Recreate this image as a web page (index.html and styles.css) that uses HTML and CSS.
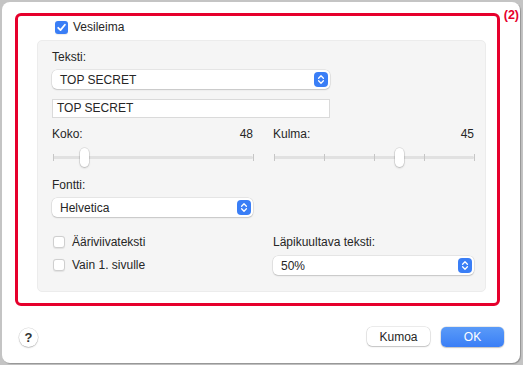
FILE: index.html
```html
<!DOCTYPE html>
<html>
<head>
    <title>Vesileima</title>
    <link rel="stylesheet" href="styles.css">
</head>
<body>
    <div class="dialog">
        <div class="frame">
            <span class="tag">(2)</span>

            <label class="check-row">
                <span class="box checked">
                    <svg width="13" height="13" viewBox="0 0 13 13"><path d="M3.2 6.8 L5.5 9.1 L9.9 3.8" fill="none" stroke="#fff" stroke-width="1.8" stroke-linecap="round" stroke-linejoin="round"/></svg>
                </span>
                Vesileima
            </label>

            <div class="panel">
                <div class="label">Teksti:</div>
                <div class="popup wide">
                    <span>TOP SECRET</span>
                    <span class="stepper">
                        <svg width="14" height="15" viewBox="0 0 14 15"><path d="M4.6 6.2 L7 3.8 L9.4 6.2 M4.6 8.8 L7 11.2 L9.4 8.8" fill="none" stroke="#fff" stroke-width="1.3" stroke-linecap="round" stroke-linejoin="round"/></svg>
                    </span>
                </div>
                <div class="field">TOP SECRET</div>

                <div class="columns">
                    <div class="col">
                        <div class="value-row"><span>Koko:</span><span>48</span></div>
                        <div class="slider">
                            <div class="track"></div>
                            <span class="tick" style="left: 0%"></span>
                            <span class="tick" style="left: 100%"></span>
                            <span class="thumb" style="left: 15.5%"></span>
                        </div>
                        <div class="label font-label">Fontti:</div>
                        <div class="popup">
                            <span>Helvetica</span>
                            <span class="stepper">
                                <svg width="14" height="15" viewBox="0 0 14 15"><path d="M4.6 6.2 L7 3.8 L9.4 6.2 M4.6 8.8 L7 11.2 L9.4 8.8" fill="none" stroke="#fff" stroke-width="1.3" stroke-linecap="round" stroke-linejoin="round"/></svg>
                            </span>
                        </div>
                    </div>
                    <div class="col">
                        <div class="value-row"><span>Kulma:</span><span>45</span></div>
                        <div class="slider">
                            <div class="track"></div>
                            <span class="tick" style="left: 0%"></span>
                            <span class="tick" style="left: 25%"></span>
                            <span class="tick" style="left: 50%"></span>
                            <span class="tick" style="left: 75%"></span>
                            <span class="tick" style="left: 100%"></span>
                            <span class="thumb" style="left: 62.4%"></span>
                        </div>
                    </div>
                </div>

                <div class="columns bottom">
                    <div class="col checks">
                        <label class="opt"><span class="box"></span>Ääriviivateksti</label>
                        <label class="opt"><span class="box"></span>Vain 1. sivulle</label>
                    </div>
                    <div class="col">
                        <div class="label opt-label">Läpikuultava teksti:</div>
                        <div class="popup">
                            <span>50%</span>
                            <span class="stepper">
                                <svg width="14" height="15" viewBox="0 0 14 15"><path d="M4.6 6.2 L7 3.8 L9.4 6.2 M4.6 8.8 L7 11.2 L9.4 8.8" fill="none" stroke="#fff" stroke-width="1.3" stroke-linecap="round" stroke-linejoin="round"/></svg>
                            </span>
                        </div>
                    </div>
                </div>
            </div>
        </div>

        <div class="footer">
            <button class="help">?</button>
            <div class="actions">
                <button class="btn">Kumoa</button>
                <button class="btn primary">OK</button>
            </div>
        </div>
    </div>
</body>
</html>
```

FILE: styles.css
```css
* {
    box-sizing: border-box;
    margin: 0;
    padding: 0;
}

body {
    font-family: "Liberation Sans", Arial, sans-serif;
    font-size: 12px;
    color: #262626;
    background-color: #c4c4c4;
    width: 523px;
    height: 365px;
    overflow: hidden;
}

.dialog {
    margin: 2px 3px 2px 2px;
    height: 361px;
    background-color: #fff;
    border-radius: 8px;
    padding: 11px 0 0 13px;
    display: flex;
    flex-direction: column;
    box-shadow: 1px 1px 1px rgba(0, 0, 0, 0.25);
}

.frame {
    position: relative;
    width: 485px;
    height: 293px;
    border: 3px solid #e6002c;
    border-radius: 6px;
    display: flex;
    flex-direction: column;
}

.tag {
    position: absolute;
    top: -8px;
    right: -22px;
    color: #e6002c;
    font-weight: bold;
    font-size: 12.5px;
}

.check-row {
    height: 22px;
    margin-bottom: 2px;
    padding-left: 37px;
    display: flex;
    align-items: center;
    gap: 5px;
    font-size: 12px;
}

.box {
    width: 12px;
    height: 12px;
    border-radius: 3px;
    background-color: #fff;
    border: 1px solid #cfcfcf;
    box-shadow: 0 0.5px 1px rgba(0, 0, 0, 0.08);
    display: inline-flex;
    flex-shrink: 0;
}

.box.checked {
    width: 13px;
    height: 13px;
    border: none;
    background-color: #3a7ef6;
}

.panel {
    flex: 1;
    margin: 0 11px 11px 19px;
    background-color: #f5f5f5;
    border: 1px solid #ececec;
    border-radius: 5px;
    padding: 9px 11px 0 14px;
}

.label {
    line-height: 14px;
}

.popup {
    position: relative;
    height: 19px;
    background-color: #fff;
    border-radius: 5px;
    box-shadow: 0 0 0 0.5px rgba(0, 0, 0, 0.12), 0 1px 1.5px rgba(0, 0, 0, 0.15);
    display: flex;
    align-items: center;
    justify-content: space-between;
    padding-left: 8px;
    padding-right: 2px;
}

.popup.wide {
    width: 278px;
    margin-top: 6px;
}

.stepper {
    width: 14px;
    height: 15px;
    border-radius: 4px;
    background-color: #3a7ef6;
    display: flex;
}

.field {
    width: 278px;
    height: 19px;
    margin-top: 10px;
    background-color: #fff;
    border: 1px solid #dadada;
    padding-left: 4px;
    line-height: 17px;
}

.columns {
    display: grid;
    grid-template-columns: 201px 201px;
    column-gap: 20px;
}

.value-row {
    margin-top: 9px;
    line-height: 14px;
    display: flex;
    justify-content: space-between;
}

.slider {
    position: relative;
    height: 20px;
    margin-top: 6px;
    margin-left: 1px;
}

.track {
    position: absolute;
    left: 0;
    right: 0;
    top: 9px;
    height: 3px;
    border-radius: 2px;
    background-color: #e1e1e1;
}

.tick {
    position: absolute;
    top: 7px;
    width: 1px;
    height: 7px;
    background-color: #c6c6c6;
}

.thumb {
    position: absolute;
    top: 1px;
    width: 9px;
    height: 19px;
    margin-left: -4px;
    border-radius: 5px;
    background-color: #fff;
    box-shadow: 0 0 0 0.5px rgba(0, 0, 0, 0.15), 0 1px 2px rgba(0, 0, 0, 0.2);
}

.font-label {
    margin-top: 11px;
}

.col .popup {
    margin-top: 6px;
}

.bottom {
    margin-top: 16px;
}

.checks {
    display: flex;
    flex-direction: column;
    gap: 5px;
}

.opt {
    height: 18px;
    display: flex;
    align-items: center;
    gap: 7px;
    padding-left: 1px;
}

.opt-label {
    line-height: 18px;
}

.bottom .col .popup {
    margin-top: 5px;
}

.footer {
    margin-top: auto;
    padding: 0 16px 16px 4px;
    display: flex;
    justify-content: space-between;
    align-items: center;
}

button {
    font-family: "Liberation Sans", Arial, sans-serif;
    font-size: 12px;
    color: #262626;
    border: none;
    background-color: #fff;
}

.help {
    width: 19px;
    height: 19px;
    border-radius: 50%;
    box-shadow: 0 0 0 0.5px rgba(0, 0, 0, 0.15), 0 1px 1.5px rgba(0, 0, 0, 0.18);
    font-size: 13px;
    font-weight: bold;
    color: #333;
}

.actions {
    display: flex;
    gap: 11px;
}

.btn {
    width: 63px;
    height: 19px;
    border-radius: 5px;
    box-shadow: 0 0 0 0.5px rgba(0, 0, 0, 0.15), 0 1px 1.5px rgba(0, 0, 0, 0.18);
}

.btn.primary {
    background: linear-gradient(#5a9bf8, #3a7ef6);
    color: #fff;
    height: 20px;
}
```
